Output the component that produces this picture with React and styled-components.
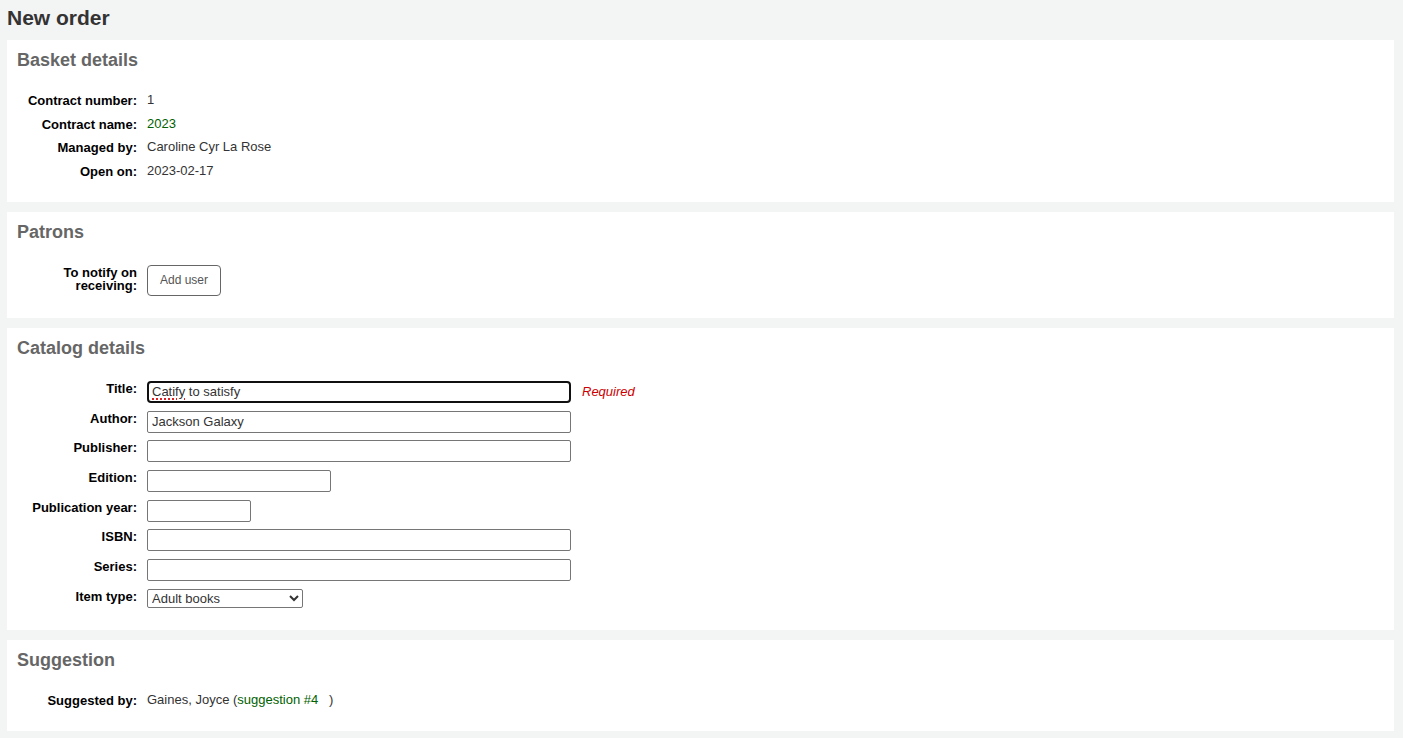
import React from 'react';
import styled, { createGlobalStyle } from 'styled-components';

const Global = createGlobalStyle`
  html, body { margin: 0; padding: 0; background: #f3f4f4; }
  body { font-family: "Liberation Sans", Arial, sans-serif; font-size: 13px; color: #333; }
  * { box-sizing: border-box; }
`;

const Page = styled.main`
  padding: 6px 9px 0 7px;
`;

const Title = styled.h1`
  margin: 0 0 10px;
  font-size: 21px;
  line-height: 24px;
  font-weight: bold;
  color: #333;
`;

const Panel = styled.section`
  background: #fff;
  padding: 10px 10px 22px;
  margin-bottom: 10px;
`;

const PanelHeading = styled.h2`
  margin: 0 0 21px;
  font-size: 18px;
  line-height: 20px;
  font-weight: bold;
  color: #666;
`;

const Fields = styled.div`
  display: flex;
  flex-direction: column;
  gap: ${p => p.$gap || 0}px;
`;

const Row = styled.div`
  display: grid;
  grid-template-columns: 120px 1fr;
  column-gap: 10px;
  align-items: start;
`;

const Label = styled.label`
  display: block;
  text-align: right;
  font-weight: bold;
  color: #000;
  line-height: 13px;
  padding-top: 3px;
`;

const Value = styled.div`
  line-height: 18px;
  color: #333;
`;

const Link = styled.a`
  color: #006100;
  text-decoration: none;
  margin-right: ${p => p.$mr || 0}px;
`;

const Control = styled.div`
  display: flex;
  align-items: center;
  padding-top: 2px;
`;

const FieldWrap = styled.div`
  position: relative;
  display: inline-block;
`;

const TextInput = styled.input`
  width: ${p => p.$w}px;
  height: 22px;
  margin: 0;
  padding: 0 4px;
  font-family: "Liberation Sans", Arial, sans-serif;
  font-size: 13px;
  color: #333;
  background: #fff;
  border: 1px solid #767676;
  border-radius: 2px;
  outline: none;
  ${p => p.$focused && `
    border: 2px solid #101010;
    border-radius: 4px;
    padding: 0 3px;
  `}
`;

const Squiggle = styled.span`
  position: absolute;
  left: 5px;
  top: 3px;
  font-size: 13px;
  line-height: 16px;
  color: transparent;
  text-decoration: underline dotted #e02020;
  text-decoration-thickness: 1.5px;
  text-underline-offset: 3px;
  pointer-events: none;
`;

const Required = styled.span`
  margin-left: 11px;
  color: #c00;
  font-style: italic;
  font-size: 13px;
`;

const Select = styled.select`
  width: 156px;
  height: 19px;
  margin: 0;
  font-family: "Liberation Sans", Arial, sans-serif;
  font-size: 13px;
  color: #333;
  background: #fff;
  border: 1px solid #767676;
  border-radius: 2px;
`;

const Button = styled.button`
  height: 31px;
  padding: 0 12px;
  font-family: "Liberation Sans", Arial, sans-serif;
  font-size: 12px;
  color: #555;
  background: #fff;
  border: 1px solid #666;
  border-radius: 4px;
  cursor: pointer;
`;

const basket = [
  ['Contract number:', '1'],
  ['Contract name:', '2023', true],
  ['Managed by:', 'Caroline Cyr La Rose'],
  ['Open on:', '2023-02-17'],
];

const catalog = [
  { label: 'Title:', w: 424, value: 'Catify to satisfy', focused: true, required: true },
  { label: 'Author:', w: 424, value: 'Jackson Galaxy' },
  { label: 'Publisher:', w: 424 },
  { label: 'Edition:', w: 184 },
  { label: 'Publication year:', w: 104 },
  { label: 'ISBN:', w: 424 },
  { label: 'Series:', w: 424 },
];

export default function App() {
  return (
    <>
      <Global />
      <Page>
        <Title>New order</Title>

        <Panel>
          <PanelHeading>Basket details</PanelHeading>
          <Fields $gap={5.67}>
            {basket.map(([l, v, link]) => (
              <Row key={l}>
                <Label>{l}</Label>
                <Value>{link ? <Link href="#">{v}</Link> : v}</Value>
              </Row>
            ))}
          </Fields>
        </Panel>

        <Panel>
          <PanelHeading>Patrons</PanelHeading>
          <Fields>
            <Row>
              <Label>To notify on receiving:</Label>
              <Control>
                <Button type="button">Add user</Button>
              </Control>
            </Row>
          </Fields>
        </Panel>

        <Panel>
          <PanelHeading>Catalog details</PanelHeading>
          <Fields $gap={5.71}>
            {catalog.map(f => (
              <Row key={f.label}>
                <Label>{f.label}</Label>
                <Control>
                  <FieldWrap>
                    <TextInput
                      type="text"
                      $w={f.w}
                      $focused={f.focused}
                      defaultValue={f.value || ''}
                      spellCheck={false}
                    />
                    {f.focused && <Squiggle>Catify</Squiggle>}
                  </FieldWrap>
                  {f.required && <Required>Required</Required>}
                </Control>
              </Row>
            ))}
            <Row>
              <Label>Item type:</Label>
              <Control>
                <Select defaultValue="adult">
                  <option value="adult">Adult books</option>
                </Select>
              </Control>
            </Row>
          </Fields>
        </Panel>

        <Panel>
          <PanelHeading>Suggestion</PanelHeading>
          <Fields>
            <Row>
              <Label>Suggested by:</Label>
              <Value>
                Gaines, Joyce (<Link href="#" $mr={7}>suggestion #4</Link> )
              </Value>
            </Row>
          </Fields>
        </Panel>
      </Page>
    </>
  );
}
